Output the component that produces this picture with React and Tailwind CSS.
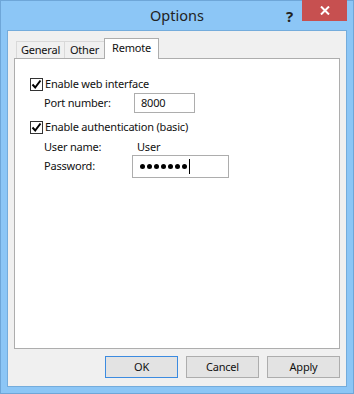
import React from "react";

function Check() {
  return (
    <div className="w-[13px] h-[13px] border border-[#333333] bg-white flex items-center justify-center shrink-0">
      <svg width="11" height="11" viewBox="0 0 11 11">
        <path d="M1.5 5.5 L4.2 8.5 L9.5 1.5" fill="none" stroke="#000" strokeWidth="2" />
      </svg>
    </div>
  );
}

function Btn({ children, primary }) {
  return (
    <div
      className={
        "w-[73px] h-[22px] flex items-center justify-center bg-[#e3e3e3] border " +
        (primary ? "border-[#3c8be0]" : "border-[#adadad]")
      }
    >
      {children}
    </div>
  );
}

export default function App() {
  return (
    <div
      className="w-[354px] h-[394px] bg-[#8cc6f6] border border-[#6ea6d8] flex flex-col text-[11px] tracking-[-0.2px] text-[#111]"
      style={{ fontFamily: '"Noto Sans", sans-serif' }}
    >
      <div className="h-[29px] relative flex items-center justify-center">
        <span className="text-[14.5px] tracking-normal text-[#222]">Options</span>
        <span className="absolute left-[285px] top-[4px] text-[15px] font-bold text-[#222]">?</span>
        <div className="absolute left-[301px] top-[-1px] w-[45px] h-[21px] bg-[#c75050] flex items-center justify-center">
          <svg width="10" height="9" viewBox="0 0 10 9">
            <path d="M1 0.5 L9 8.5 M9 0.5 L1 8.5" stroke="#fff" strokeWidth="2" />
          </svg>
        </div>
      </div>
      <div className="mx-[6px] h-[357px] border border-[#74acdc] bg-[#f0f0f0] flex flex-col px-[6px]">
        <div className="flex items-end h-[27px] pl-[2px]">
          <div className="h-[17px] w-[49px] flex items-center justify-center border border-b-0 border-[#d9d9d9] bg-[#f0f0f0]">General</div>
          <div className="h-[17px] w-[40px] flex items-center justify-center border border-b-0 border-l-0 border-[#d9d9d9] bg-[#f0f0f0]">Other</div>
          <div className="h-[21px] w-[55px] -ml-[1px] -mb-[1px] relative z-10 flex items-start justify-center pt-[1px] border border-b-0 border-[#adadad] bg-white">Remote</div>
        </div>
        <div className="h-[291px] border border-[#adadad] bg-white pl-[15px] pt-[17px]">
          <div className="flex items-center gap-[2px] h-[16px]">
            <Check />
            <span>Enable web interface</span>
          </div>
          <div className="flex items-center h-[20px] mt-[1px] pl-[14px]">
            <span className="w-[90px]">Port number:</span>
            <div className="w-[61px] h-[20px] border border-[#adadad] flex items-center pl-[6px]">8000</div>
          </div>
          <div className="flex items-center gap-[2px] h-[16px] mt-[6px]">
            <Check />
            <span>Enable authentication (basic)</span>
          </div>
          <div className="flex items-center h-[14px] mt-[5px] pl-[14px]">
            <span className="w-[93px]">User name:</span>
            <span>User</span>
          </div>
          <div className="flex items-center h-[23px] mt-[1px] pl-[14px]">
            <span className="w-[88px]">Password:</span>
            <div className="w-[97px] h-[23px] border border-[#adadad] flex items-center pl-[7px]">
              <div className="flex gap-[2px]">
                <span className="w-[5px] h-[5px] rounded-full bg-black"></span>
                <span className="w-[5px] h-[5px] rounded-full bg-black"></span>
                <span className="w-[5px] h-[5px] rounded-full bg-black"></span>
                <span className="w-[5px] h-[5px] rounded-full bg-black"></span>
                <span className="w-[5px] h-[5px] rounded-full bg-black"></span>
                <span className="w-[5px] h-[5px] rounded-full bg-black"></span>
                <span className="w-[5px] h-[5px] rounded-full bg-black"></span>
              </div>
              <span className="w-[1px] h-[15px] bg-black ml-[2px]"></span>
            </div>
          </div>
        </div>
        <div className="flex justify-end gap-[8px] mt-[7px]">
          <Btn primary>OK</Btn>
          <Btn>Cancel</Btn>
          <Btn>Apply</Btn>
        </div>
      </div>
    </div>
  );
}
